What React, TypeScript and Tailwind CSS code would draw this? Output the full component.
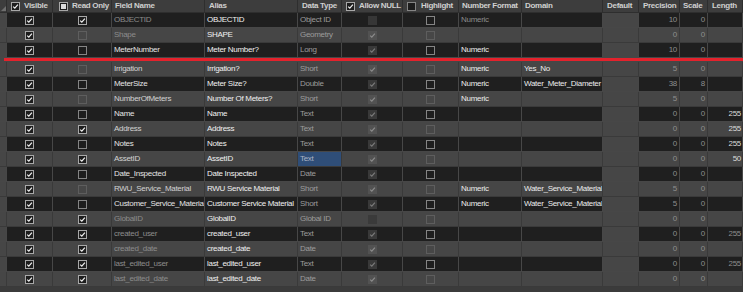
import React from "react";

type CB = "on" | "off" | "dison" | "disoff" | "ind";

const cols =
  "grid grid-cols-[7px_46px_59px_93px_93px_44px_61px_56px_63px_81px_36px_41px_28px_35px]";

function Box({ kind, dark }: { kind: CB; dark: boolean }) {
  let cls = "";
  let check = "";
  if (kind === "on") {
    cls = "bg-[#1d1d1d] border-[#a8a8a8]";
    check = "#f2f2f2";
  } else if (kind === "off") {
    cls = dark ? "bg-[#1d1d1d] border-[#858585]" : "bg-[#474747] border-[#5e5e5e]";
  } else if (kind === "dison") {
    cls = dark ? "bg-[#393939] border-[#393939]" : "bg-[#525252] border-[#525252]";
    check = dark ? "#7a7a7a" : "#8c8c8c";
  } else if (kind === "disoff") {
    cls = dark ? "bg-[#363636] border-[#363636]" : "bg-[#3a3a3a] border-[#3a3a3a]";
  } else {
    cls = "bg-[#1d1d1d] border-[#a8a8a8]";
  }
  return (
    <span className={`relative inline-block shrink-0 w-[9px] h-[9px] border ${cls}`}>
      {check && (
        <svg className="absolute left-0 top-0" width="7" height="7" viewBox="0 0 7 7">
          <polyline points="1.2,3.6 2.8,5.1 5.9,1.6" fill="none" stroke={check} strokeWidth="1.2" />
        </svg>
      )}
      {kind === "ind" && <span className="absolute left-[1px] top-[1px] w-[5px] h-[5px] bg-[#dcdcdc]" />}
    </span>
  );
}

type Row = {
  f: string;
  a: string;
  t: string;
  ro: boolean;
  sys: boolean;
  nul: boolean;
  nf: string;
  dom: string;
  p: string;
  s: string;
  l: string;
  lGray?: boolean;
  sel?: boolean;
};

const rows: Row[] = [
  { f: "OBJECTID", a: "OBJECTID", t: "Object ID", ro: true, sys: true, nul: false, nf: "Numeric", dom: "", p: "10", s: "0", l: "" },
  { f: "Shape", a: "SHAPE", t: "Geometry", ro: false, sys: true, nul: true, nf: "", dom: "", p: "0", s: "0", l: "" },
  { f: "MeterNumber", a: "Meter Number?", t: "Long", ro: false, sys: false, nul: true, nf: "Numeric", dom: "", p: "10", s: "0", l: "" },
  { f: "Irrigation", a: "Irrigation?", t: "Short", ro: false, sys: false, nul: true, nf: "Numeric", dom: "Yes_No", p: "5", s: "0", l: "" },
  { f: "MeterSize", a: "Meter Size?", t: "Double", ro: false, sys: false, nul: true, nf: "Numeric", dom: "Water_Meter_Diameter", p: "38", s: "8", l: "" },
  { f: "NumberOfMeters", a: "Number Of Meters?", t: "Short", ro: false, sys: false, nul: true, nf: "Numeric", dom: "", p: "5", s: "0", l: "" },
  { f: "Name", a: "Name", t: "Text", ro: false, sys: false, nul: true, nf: "", dom: "", p: "0", s: "0", l: "255" },
  { f: "Address", a: "Address", t: "Text", ro: true, sys: false, nul: true, nf: "", dom: "", p: "0", s: "0", l: "255" },
  { f: "Notes", a: "Notes", t: "Text", ro: false, sys: false, nul: true, nf: "", dom: "", p: "0", s: "0", l: "255" },
  { f: "AssetID", a: "AssetID", t: "Text", ro: true, sys: false, nul: true, nf: "", dom: "", p: "0", s: "0", l: "50", sel: true },
  { f: "Date_Inspected", a: "Date Inspected", t: "Date", ro: false, sys: false, nul: true, nf: "", dom: "", p: "0", s: "0", l: "" },
  { f: "RWU_Service_Material", a: "RWU Service Material", t: "Short", ro: false, sys: false, nul: true, nf: "Numeric", dom: "Water_Service_Material", p: "5", s: "0", l: "" },
  { f: "Customer_Service_Material", a: "Customer Service Material", t: "Short", ro: false, sys: false, nul: true, nf: "Numeric", dom: "Water_Service_Material", p: "5", s: "0", l: "" },
  { f: "GlobalID", a: "GlobalID", t: "Global ID", ro: true, sys: true, nul: false, nf: "", dom: "", p: "0", s: "0", l: "" },
  { f: "created_user", a: "created_user", t: "Text", ro: true, sys: true, nul: true, nf: "", dom: "", p: "0", s: "0", l: "255", lGray: true },
  { f: "created_date", a: "created_date", t: "Date", ro: true, sys: true, nul: true, nf: "", dom: "", p: "0", s: "0", l: "" },
  { f: "last_edited_user", a: "last_edited_user", t: "Text", ro: true, sys: true, nul: true, nf: "", dom: "", p: "0", s: "0", l: "255", lGray: true },
  { f: "last_edited_date", a: "last_edited_date", t: "Date", ro: true, sys: true, nul: true, nf: "", dom: "", p: "0", s: "0", l: "" },
];

function DataRow({ r, dark }: { r: Row; dark: boolean }) {
  const c = dark
    ? "bg-[#1f1f1f] border-r border-b border-[#474747]"
    : "bg-[#464646] border-r border-b border-[#3a3a3a]";
  const g = dark
    ? "bg-[#464646] border-r border-b border-[#474747]"
    : "bg-[#464646] border-r border-b border-[#3a3a3a]";
  const txt = "pl-[2px] overflow-hidden whitespace-nowrap";
  const num = "pr-[2px] text-right text-[#8e8e8e]";
  return (
    <div className={`${cols} h-[15px] leading-[14px]`}>
      <div className={g} />
      <div className={`${c} flex items-center justify-center`}>
        <Box kind="on" dark={dark} />
      </div>
      <div className={`${c} flex items-center justify-center`}>
        <Box kind={r.ro ? "on" : "off"} dark={dark} />
      </div>
      <div className={`${c} ${txt} ${r.sys ? "text-[#8c8c8c]" : dark ? "text-[#e4e4e4]" : "text-[#d2d2d2]"}`}>{r.f}</div>
      <div className={`${c} ${txt} text-[#f0f0f0]`}>{r.a}</div>
      <div
        className={`${r.sel ? "bg-[#2f4e78] border-r border-b border-[#3a3a3a]" : c} ${txt} ${r.sel ? "text-[#aab4c4]" : "text-[#9c9c9c]"}`}
      >
        {r.t}
      </div>
      <div className={`${c} flex items-center justify-center`}>
        <Box kind={r.nul ? "dison" : "disoff"} dark={dark} />
      </div>
      <div className={`${c} flex items-center justify-center`}>
        <Box kind="off" dark={dark} />
      </div>
      <div className={`${c} ${txt} ${r.sys ? "text-[#8c8c8c]" : "text-[#ececec]"}`}>{r.nf}</div>
      <div className={`${c} ${txt} text-[#ececec]`}>{r.dom}</div>
      <div className={g} />
      <div className={`${c} ${num}`}>{r.p}</div>
      <div className={`${c} ${num}`}>{r.s}</div>
      <div className={`${c} pr-[1px] text-right ${r.lGray ? "text-[#8e8e8e]" : "text-[#dcdcdc]"}`}>{r.l}</div>
    </div>
  );
}

export default function App() {
  const h = "border-r border-b border-[#2e2e2e] flex items-center px-[3px] whitespace-nowrap overflow-hidden";
  return (
    <div
      className="w-[743px] h-[292px] overflow-hidden bg-[#3b3b3b] text-[8px] tracking-[-0.3px] select-none"
      style={{ fontFamily: "'Liberation Sans', Arial, sans-serif" }}
    >
      <div className={`${cols} h-[13px] bg-[#3d3d3d] text-[#cfcfcf] font-bold`}>
        <div className="border-r border-b border-[#2e2e2e] relative">
          <svg className="absolute left-[1px] bottom-[1px]" width="5" height="5" viewBox="0 0 5 5">
            <polygon points="5,0 5,5 0,5" fill="#6e6e6e" />
          </svg>
        </div>
        <div className={`${h} gap-[4px] pl-[4px]`}>
          <Box kind="on" dark />
          <span>Visible</span>
        </div>
        <div className={`${h} gap-[4px] pl-[6px]`}>
          <Box kind="ind" dark />
          <span>Read Only</span>
        </div>
        <div className={h}>Field Name</div>
        <div className={`${h} pl-[4px]`}>Alias</div>
        <div className={`${h} pl-[4px]`}>Data Type</div>
        <div className={`${h} gap-[4px] pl-[4px]`}>
          <Box kind="on" dark />
          <span>Allow NULL</span>
        </div>
        <div className={`${h} gap-[5px] pl-[4px]`}>
          <Box kind="off" dark />
          <span>Highlight</span>
        </div>
        <div className={h}>Number Format</div>
        <div className={h}>Domain</div>
        <div className={`${h} pl-[4px]`}>Default</div>
        <div className={`${h} pl-[4px]`}>Precision</div>
        <div className={h}>Scale</div>
        <div className={`${h} pl-[4px]`}>Length</div>
      </div>
      {rows.slice(0, 3).map((r, i) => (
        <DataRow key={r.f} r={r} dark={i % 2 === 0} />
      ))}
      <div className="h-[4px] bg-[#464646] flex flex-col">
        <div className="ml-[4px] h-[3px] bg-[#e3222c]" />
      </div>
      {rows.slice(3).map((r, i) => (
        <DataRow key={r.f} r={r} dark={(i + 3) % 2 === 0} />
      ))}
    </div>
  );
}
